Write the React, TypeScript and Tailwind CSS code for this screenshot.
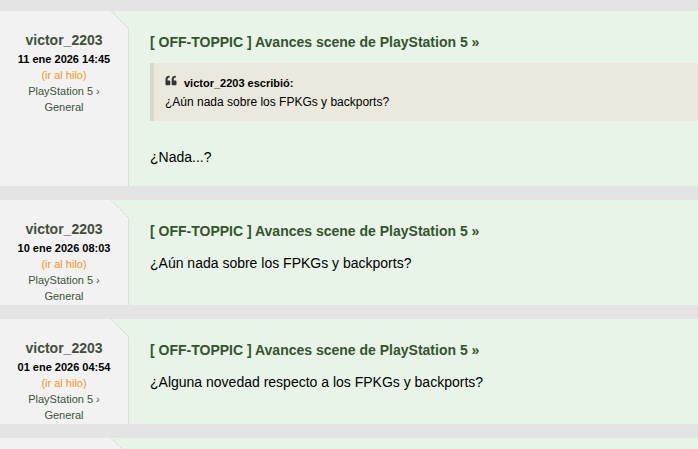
import React from 'react'
import { FaQuoteLeft } from 'react-icons/fa'

type Post = {
  date: string
  quote?: { author: string; text: string }
  body: string
}

const posts: Post[] = [
  {
    date: '11 ene 2026 14:45',
    quote: { author: 'victor_2203', text: '¿Aún nada sobre los FPKGs y backports?' },
    body: '¿Nada...?',
  },
  { date: '10 ene 2026 08:03', body: '¿Aún nada sobre los FPKGs y backports?' },
  { date: '01 ene 2026 04:54', body: '¿Alguna novedad respecto a los FPKGs y backports?' },
  { date: '28 dic 2025 19:12', body: '¿Alguna novedad?' },
]

function Fold() {
  return (
    <svg className="absolute top-0 right-[-1px] w-[18px] h-[18px]" viewBox="0 0 18 18">
      <polygon points="0,0 18,0 18,18" fill="#e8f4e8" />
      <line x1="0.5" y1="0.5" x2="17.5" y2="17.5" stroke="#c8c8c8" strokeWidth="1" strokeDasharray="1 1" />
    </svg>
  )
}

function PostRow({ post }: { post: Post }) {
  return (
    <div className="flex shrink-0">
      {/* autor */}
      <div className="relative w-[129px] shrink-0 bg-[#f2f2f2] border-r border-[#dddddd] pt-[20px] pb-[1px] text-center">
        <Fold />
        <div className="text-[14px] leading-[18px] font-bold text-[#3f4f3c]">victor_2203</div>
        <div className="mt-[2px] text-[11px] leading-4 font-bold text-black">{post.date}</div>
        <div className="text-[11px] leading-4 text-[#f7941d]">(ir al hilo)</div>
        <div className="text-[11px] leading-4 text-[#3d5438]">PlayStation 5 ›</div>
        <div className="text-[11px] leading-4 text-[#3d5438]">General</div>
      </div>

      {/* mensaje */}
      <div className="flex-1 bg-[#e8f4e8] pl-[21px] pt-[22px] pb-[20px]">
        <div className="text-[14px] leading-[18px] font-bold text-[#34552c]">
          [ OFF-TOPPIC ] Avances scene de PlayStation 5 »
        </div>
        {post.quote && (
          <div className="mt-[12px] bg-[#ebe9de] border-l-[4px] border-[#d9d8cc] pl-[11px] pt-[11px] pb-[11px]">
            <div className="flex items-center gap-[7px] h-[15px]">
              <FaQuoteLeft className="w-[12px] h-[11px] text-[#333333] -mt-[3px]" />
              <span className="text-[11px] leading-[14px] font-bold text-black mt-[2px]">
                {post.quote.author} escribió:
              </span>
            </div>
            <div className="mt-[5px] text-[12px] leading-4 text-black">{post.quote.text}</div>
          </div>
        )}
        <div className={`${post.quote ? 'mt-[27px]' : 'mt-[14px]'} text-[14px] leading-[18px] text-black`}>
          {post.body}
        </div>
      </div>
    </div>
  )
}

export default function App() {
  return (
    <div className="h-screen overflow-hidden bg-[#e4e4e4] pt-[11px] font-['Liberation_Sans',Arial,sans-serif]">
      <div className="flex flex-col gap-[14px]">
        {posts.map((p, i) => (
          <PostRow key={i} post={p} />
        ))}
      </div>
    </div>
  )
}
